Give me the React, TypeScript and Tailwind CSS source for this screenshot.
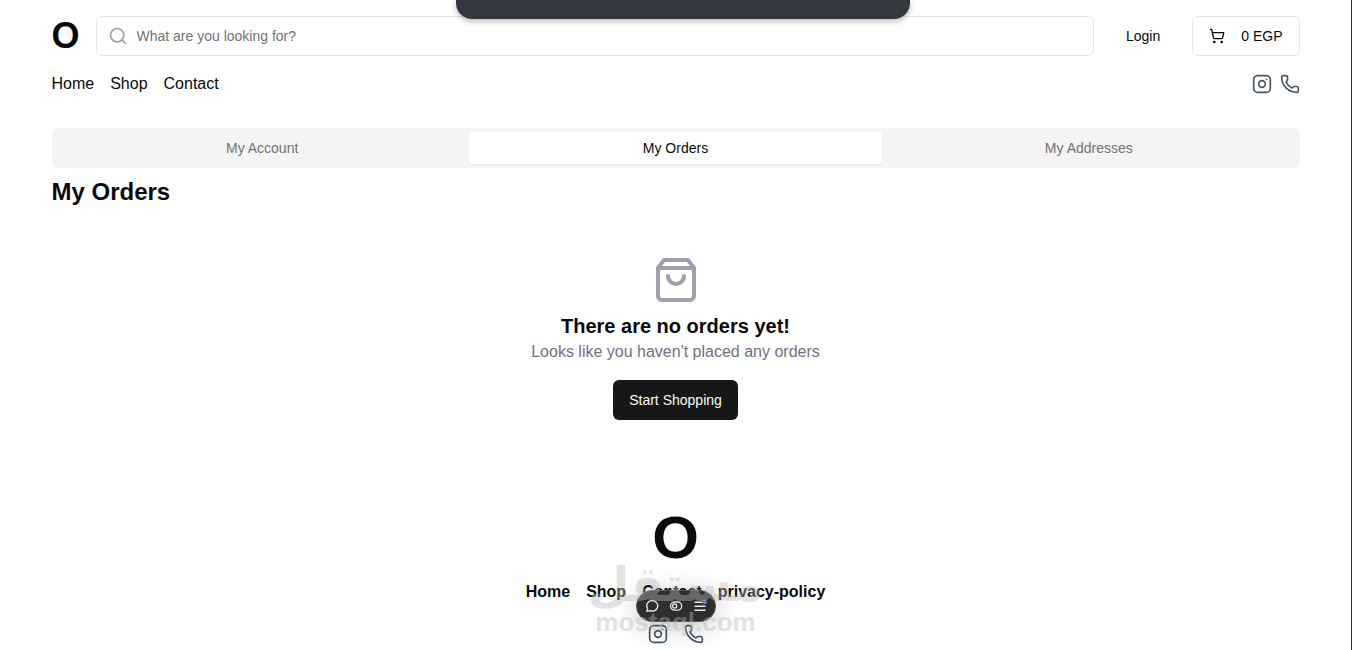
import { useState } from "react";
import { Phone, Search, ShoppingCart } from "lucide-react";

const LINKS = [
  { title: "Home", href: "#home" },
  { title: "Shop", href: "#shop" },
  { title: "Contact", href: "#contact" },
];

const TABS = [
  { id: 1, title: "My Account" },
  { id: 2, title: "My Orders" },
  { id: 3, title: "My Addresses" },
];

const InstagramIcon = () => (
  <svg
    viewBox="0 0 24 24"
    fill="none"
    stroke="currentColor"
    strokeWidth="2"
    strokeLinecap="round"
    strokeLinejoin="round"
    className="size-5"
  >
    <rect x="2" y="2" width="20" height="20" rx="5" />
    <circle cx="12" cy="12" r="4" />
    <path d="M17.5 6.5h.01" />
  </svg>
);

const BagIcon = () => (
  <svg
    viewBox="0 0 24 24"
    fill="none"
    stroke="currentColor"
    strokeWidth="2"
    strokeLinecap="round"
    strokeLinejoin="round"
    className="size-12 text-[#9f9fae]"
  >
    <path d="M6 2 3 6v14a2 2 0 0 0 2 2h14a2 2 0 0 0 2-2V6l-3-4Z" />
    <path d="M3 6h18" />
    <path d="M16 10a4 4 0 0 1-8 0" />
  </svg>
);

const SocialLinks = () => (
  <>
    <a href="#instagram" aria-label="Instagram">
      <InstagramIcon />
    </a>
    <a href="#phone" aria-label="Phone">
      <Phone className="size-5" />
    </a>
  </>
);

const Header = () => (
  <header className="pt-4">
    <div className="flex items-center gap-4">
      <a href="#home" className="text-4xl font-bold">
        O
      </a>
      <label className="flex h-10 grow items-center gap-[9px] rounded-md border border-[#e5e5e5] px-[11px]">
        <Search className="size-5 text-gray-400" />
        <input
          type="text"
          aria-label="Search"
          placeholder="What are you looking for?"
          className="grow bg-transparent text-sm placeholder:text-[#737373] focus:outline-none"
        />
      </label>
      <button className="h-10 px-4 text-sm">Login</button>
      <button className="flex h-10 items-center gap-4 rounded-md border border-[#e5e5e5] px-4 text-sm">
        <ShoppingCart className="size-4" />
        0 EGP
      </button>
    </div>
    <div className="mt-4 flex items-center justify-between">
      <nav className="flex gap-4">
        {LINKS.map((link) => (
          <a key={link.title} href={link.href}>
            {link.title}
          </a>
        ))}
      </nav>
      <div className="flex gap-2 text-gray-600">
        <SocialLinks />
      </div>
    </div>
  </header>
);

const Orders = () => {
  const [activeTab, setActiveTab] = useState(2);

  return (
    <main className="mt-8">
      <div className="grid grid-cols-3 rounded-md bg-[#f4f4f4] p-1 text-sm">
        {TABS.map((tab) => (
          <button
            key={tab.id}
            onClick={() => setActiveTab(tab.id)}
            className={
              activeTab === tab.id
                ? "h-8 rounded-sm bg-white shadow-xs"
                : "h-8 rounded-sm text-[#737373]"
            }
          >
            {tab.title}
          </button>
        ))}
      </div>
      <h1 className="mt-2 text-2xl font-bold">My Orders</h1>

      {/* Empty state */}
      <div className="mt-12 flex flex-col items-center">
        <BagIcon />
        <h2 className="mt-2 text-xl font-bold">There are no orders yet!</h2>
        <p className="text-[#71717f]">Looks like you haven't placed any orders</p>
        <button className="mt-4 h-10 rounded-md bg-[#171717] px-4 text-sm text-[#fafafa]">
          Start Shopping
        </button>
      </div>
    </main>
  );
};

const Footer = () => (
  <footer className="mt-22 flex flex-col items-center">
    <a href="#home" className="text-6xl font-bold">
      O
    </a>
    <nav className="mt-3 flex gap-4 font-bold">
      {LINKS.map((link) => (
        <a key={link.title} href={link.href}>
          {link.title}
        </a>
      ))}
      <a href="#privacy-policy">privacy-policy</a>
    </nav>
    <div className="mt-5 flex gap-4 text-gray-600">
      <SocialLinks />
    </div>
  </footer>
);

const Toolbar = () => (
  <div className="absolute top-[590px] left-1/2 flex h-8 w-20 -translate-x-1/2 items-center justify-center gap-2 rounded-full border border-[#555] bg-[#2e2e2e] text-[#e6e6e6] shadow-[0_4px_24px_rgba(0,0,0,0.25)]">
    <button aria-label="Comments">
      <svg viewBox="0 0 16 16" fill="none" stroke="currentColor" strokeWidth="1.3" strokeLinejoin="round" className="size-4">
        <path d="M8.2 2.7a5.5 5.2 0 1 1-2.3 9.9L2.7 13.4l.9-2.7A5.5 5.2 0 0 1 8.2 2.7Z" />
      </svg>
    </button>
    <button aria-label="Flags">
      <svg viewBox="0 0 16 16" fill="none" stroke="currentColor" strokeWidth="1.3" className="size-4">
        <rect x="2.5" y="4" width="11.2" height="8.2" rx="4.1" />
        <circle cx="6.7" cy="8.1" r="2.1" />
      </svg>
    </button>
    <button aria-label="Menu">
      <svg viewBox="0 0 16 16" fill="none" stroke="currentColor" strokeWidth="1.5" className="size-4">
        <path d="M2.5 4.2h8M2.5 8.2h11M2.5 12.2h11" />
        <circle cx="12.6" cy="4" r="2.3" fill="#6b7fc4" stroke="none" />
      </svg>
    </button>
  </div>
);

const Watermark = () => (
  <div className="pointer-events-none absolute top-[560px] left-1/2 flex -translate-x-1/2 flex-col items-center font-bold text-[#bababa] opacity-40">
    <span lang="ar" dir="rtl" className="font-['DejaVu_Sans',sans-serif] text-5xl leading-[48px]">
      مستقل
    </span>
    <span className="text-[26px] leading-[28px]">mostaql.com</span>
  </div>
);

const App = () => {
  return (
    <div className="relative min-h-screen overflow-hidden border-r border-[#333] bg-white font-['Liberation_Sans',Arial,sans-serif] text-[#0a0a0a]">
      <div className="mx-auto max-w-[1248px]">
        <Header />
        <Orders />
        <Footer />
      </div>
      <div className="absolute top-0 left-[456px] h-[19px] w-[454px] rounded-b-2xl bg-[#35373f] shadow-[0_2px_6px_rgba(0,0,0,0.3)]" />
      <Toolbar />
      <Watermark />
    </div>
  );
};

export default App;
